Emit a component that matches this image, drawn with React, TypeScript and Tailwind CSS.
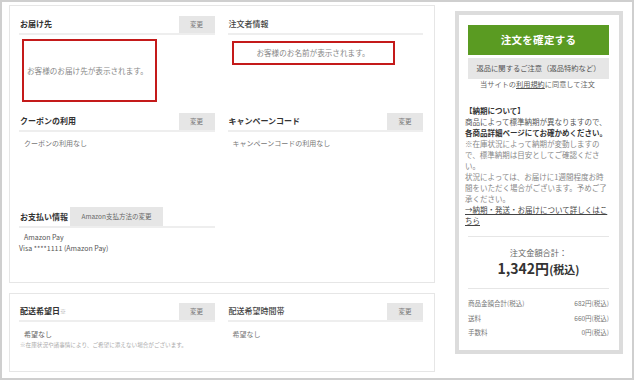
import React from "react";

const jp = "font-['Noto_Sans_CJK_JP','Noto_Sans',sans-serif]";

function SectionHead({
  title,
  button = true,
  medium = false,
  mark,
}: {
  title: string;
  button?: boolean;
  medium?: boolean;
  mark?: string;
}) {
  return (
    <div className="flex h-[20px] items-center justify-between border-b-2 border-[#eeeeee]">
      <h3
        className={
          medium
            ? "pl-[1px] text-[8px] font-medium leading-none text-[#444]"
            : "pl-[1px] text-[8px] font-bold leading-none text-[#333]"
        }
      >
        {title}
        {mark && <span className="text-[6px] font-normal text-[#aaa]">{mark}</span>}
      </h3>
      {button && (
        <button className="h-[17px] w-[36px] bg-[#e6e6e6] text-[6.5px] leading-none text-[#777]">
          変更
        </button>
      )}
    </div>
  );
}

function Body({ children }: { children: React.ReactNode }) {
  return <p className="mt-[5px] pl-[5px] text-[7px] leading-[12px] text-[#777]">{children}</p>;
}

function Row({ label, value }: { label: string; value: string }) {
  return (
    <div className="flex h-[14.5px] items-center justify-between text-[6.5px] text-[#777]">
      <span>{label}</span>
      <span>{value}</span>
    </div>
  );
}

export default function App() {
  return (
    <div className={`${jp} flex h-[380px] w-[634px] border-2 border-[#cfcfcf] bg-white pl-[7px] pt-[3px]`}>
      {/* Left side */}
      <div className="flex w-[426px] flex-col gap-[10px]">
        <section className="h-[278px] border border-[#e6e6e6] pl-[9px] pr-[11px] pt-[9px]">
          <div className="grid grid-cols-2 items-start gap-x-[13px]">
            <div>
              <SectionHead title="お届け先" />
              <div className="mt-[4px] ml-[3px] flex h-[63px] w-[135px] items-center border-2 border-[#c41a1a] pl-[3px] text-[7.6px] text-[#888]">
                お客様のお届け先が表示されます。
              </div>
            </div>
            <div>
              <SectionHead title="注文者情報" button={false} medium />
              <div className="mt-[6px] ml-[4px] flex h-[24px] w-[163px] items-center justify-center border-2 border-[#c41a1a] text-[7.6px] text-[#888]">
                お客様のお名前が表示されます。
              </div>
            </div>
          </div>

          <div className="mt-[10px] grid h-[95px] grid-cols-2 items-start gap-x-[13px]">
            <div>
              <SectionHead title="クーポンの利用" />
              <Body>クーポンの利用なし</Body>
            </div>
            <div>
              <SectionHead title="キャンペーンコード" />
              <Body>キャンペーンコードの利用なし</Body>
            </div>
          </div>

          <div className="grid grid-cols-2 gap-x-[13px]">
            <div>
              <div className="flex h-[21px] items-center gap-[2px] border-b-2 border-[#eeeeee]">
                <h3 className="pl-[1px] text-[8px] font-bold leading-none text-[#333]">お支払い情報</h3>
                <button className="h-[19px] w-[93px] bg-[#e6e6e6] text-[6.5px] leading-none text-[#666]">
                  Amazon支払方法の変更
                </button>
              </div>
              <div className="mt-[4px] text-[7px] leading-[11px] text-[#555]">
                <p className="pl-[5px]">Amazon Pay</p>
                <p>Visa ****1111 (Amazon Pay)</p>
              </div>
            </div>
          </div>
        </section>

        <section className="h-[79px] border border-[#e6e6e6] pl-[9px] pr-[11px] pt-[8px]">
          <div className="grid grid-cols-2 items-start gap-x-[13px]">
            <div>
              <SectionHead title="配送希望日" mark="※" />
              <p className="mt-[6px] pl-[5px] text-[7px] leading-[12px] text-[#666]">希望なし</p>
              <p className="pl-[1px] text-[5.6px] leading-[10px] text-[#aaa]">
                ※在庫状況や諸事情により、ご希望に添えない場合がございます。
              </p>
            </div>
            <div>
              <SectionHead title="配送希望時間帯" medium />
              <p className="mt-[6px] pl-[5px] text-[7px] leading-[12px] text-[#777]">希望なし</p>
            </div>
          </div>
        </section>
      </div>

      {/* Order summary */}
      <aside className="ml-[20px] mt-[6px] h-[343px] w-[168px] border-4 border-[#dcdcdc] pl-[9px] pr-[10px] pt-[10px]">
        <button className="flex h-[30px] w-full items-center justify-center bg-[#5a9b22] text-[10.5px] font-bold tracking-[0.3px] text-white">
          注文を確定する
        </button>
        <div className="mt-[3px] flex h-[21px] items-center justify-center bg-[#e6e6e6] text-[7.3px] text-[#555]">
          返品に関するご注意（返品特約など）
        </div>

        <div className="-ml-[3px] -mr-[1px] text-[7.5px] leading-[11px] text-[#666]">
          <p className="text-center text-[7.2px]">
            当サイトの<span className="text-[#555] underline">利用規約</span>に同意して注文
          </p>
          <p className="mt-[15px] font-bold text-[#333]">【納期について】</p>
          <p className="whitespace-nowrap text-[#555]">商品によって標準納期が異なりますので、</p>
          <p className="whitespace-nowrap font-bold text-[#333]">各商品詳細ページにてお確かめください。</p>
          <p className="whitespace-nowrap text-[#888]">※在庫状況によって納期が変動しますの</p>
          <p className="whitespace-nowrap text-[#888]">で、標準納期は目安としてご確認くださ</p>
          <p className="whitespace-nowrap text-[#888]">い。</p>
          <p className="whitespace-nowrap text-[#888]">状況によっては、お届けに1週間程度お時</p>
          <p className="whitespace-nowrap text-[#888]">間をいただく場合がございます。予めご了</p>
          <p className="whitespace-nowrap text-[#888]">承ください。</p>
          <a className="block whitespace-nowrap text-[#444] underline">
            →納期・発送・お届けについて詳しくはこ
            <br />
            ちら
          </a>
        </div>

        <div className="mt-[10px] border-t border-[#e6e6e6] pt-[9px] text-center">
          <p className="text-[8.2px] leading-[12px] text-[#666]">注文金額合計：</p>
          <p className="font-bold leading-[18px] text-[#333]">
            <span className="text-[14px]">1,342円</span>
            <span className="text-[11px]">(税込)</span>
          </p>
        </div>

        <div className="mt-[10px] border-t border-[#e6e6e6] pt-[8px]">
          <Row label="商品金額合計(税込)" value="682円(税込)" />
          <Row label="送料" value="660円(税込)" />
          <Row label="手数料" value="0円(税込)" />
        </div>
      </aside>
    </div>
  );
}
